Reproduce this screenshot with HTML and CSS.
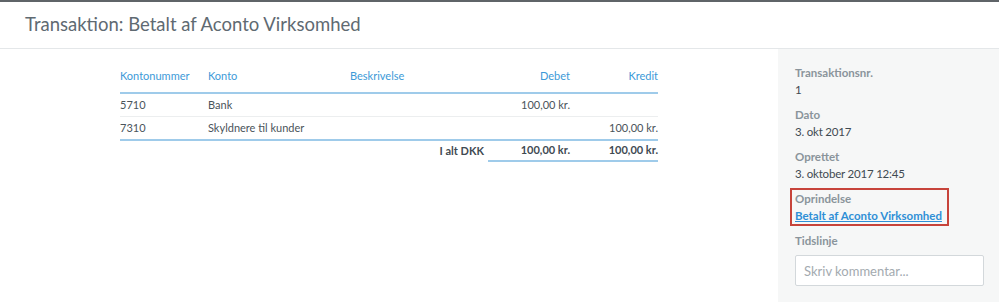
FILE: index.html
```html
<!DOCTYPE html>
<html lang="da">

<head>
    <meta charset="UTF-8">
    <meta name="viewport" content="width=device-width, initial-scale=1.0">
    <title>Transaktion</title>
    <link rel="stylesheet" href="styles.css">
</head>

<body>
    <div class="header">
        Transaktion: Betalt af Aconto Virksomhed
    </div>
    <div class="page">
        <div class="main">
            <table class="entries">
                <thead>
                    <tr>
                        <th class="col-no">Kontonummer</th>
                        <th class="col-account">Konto</th>
                        <th class="col-desc">Beskrivelse</th>
                        <th class="col-amount">Debet</th>
                        <th class="col-amount col-credit">Kredit</th>
                    </tr>
                </thead>
                <tbody>
                    <tr>
                        <td>5710</td>
                        <td>Bank</td>
                        <td></td>
                        <td class="amount">100,00 kr.</td>
                        <td class="amount"></td>
                    </tr>
                    <tr>
                        <td>7310</td>
                        <td>Skyldnere til kunder</td>
                        <td></td>
                        <td class="amount"></td>
                        <td class="amount">100,00 kr.</td>
                    </tr>
                </tbody>
                <tfoot>
                    <tr>
                        <td></td>
                        <td></td>
                        <td class="total-label">I alt DKK</td>
                        <td class="amount total">100,00 kr.</td>
                        <td class="amount total">100,00 kr.</td>
                    </tr>
                </tfoot>
            </table>
        </div>
        <div class="sidebar">
            <div class="field">
                <div class="label">Transaktionsnr.</div>
                <div class="value">1</div>
            </div>
            <div class="field">
                <div class="label">Dato</div>
                <div class="value">3. okt 2017</div>
            </div>
            <div class="field">
                <div class="label">Oprettet</div>
                <div class="value">3. oktober 2017 12:45</div>
            </div>
            <div class="field origin">
                <div class="label">Oprindelse</div>
                <a href="#" class="value link">Betalt af Aconto Virksomhed</a>
            </div>
            <div class="field">
                <div class="label">Tidslinje</div>
                <input type="text" class="comment" placeholder="Skriv kommentar...">
            </div>
        </div>
    </div>
</body>

</html>
```

FILE: styles.css
```css
* {
    margin: 0;
    padding: 0;
    box-sizing: border-box;
}

body {
    font-family: "Lato", "Open Sans", sans-serif;
    color: #3f4a52;
    background: #fff;
    height: 302px;
    overflow: hidden;
}

.header {
    height: 49px;
    padding-left: 25px;
    border-top: 2px solid #5f6468;
    border-bottom: 1px solid #e4e7e9;
    font-size: 18.5px;
    line-height: 44px;
    color: #5f6a72;
}

.page {
    display: flex;
    height: 253px;
}

.main {
    width: 778px;
    padding-top: 11px;
}

.sidebar {
    flex: 1;
    background: #f6f7f7;
    padding: 15px 15px 0 17px;
}

/* tabel */

.entries {
    width: 538px;
    margin: 0 auto;
    border-collapse: collapse;
    font-size: 11px;
}

.entries th {
    font-weight: 400;
    color: #3d9ad8;
    text-align: left;
    padding: 8px 0;
    line-height: 16px;
    border-bottom: 2px solid #9fcbea;
}

.entries .col-no {
    width: 88px;
}

.entries .col-account {
    width: 142px;
}

.entries .col-desc {
    width: 138px;
}

.entries .col-amount {
    width: 82px;
    text-align: right;
}

.entries .col-credit {
    width: 88px;
}

.entries td {
    padding: 3px 0;
    line-height: 16px;
    color: #4a545b;
}

.entries tbody tr {
    border-bottom: 1px solid #eceeef;
}

.entries tbody tr:last-child {
    border-bottom: 2px solid #9fcbea;
}

.entries .amount {
    text-align: right;
}

.entries tfoot td {
    padding: 1px 0 2px;
    font-weight: 700;
    color: #3f4a52;
}

.entries .total-label {
    text-align: right;
    padding-right: 4px;
}

.entries .total {
    border-bottom: 2px solid #9fcbea;
}

/* sidebar */

.field {
    margin-bottom: 8px;
    font-size: 11.5px;
    line-height: 17px;
}

.label {
    font-weight: 700;
    color: #8a949b;
}

.value {
    color: #3f4a52;
    letter-spacing: -0.2px;
}

.origin {
    display: inline-block;
    margin-left: -3px;
    padding: 0 5px 0 3px;
    outline: 2px solid #c7443b;
}

.link {
    display: block;
    font-weight: 700;
    color: #2f8fd6;
    letter-spacing: 0;
    text-decoration: underline;
}

.comment {
    display: block;
    width: 189px;
    height: 31px;
    margin-top: 6px;
    padding: 0 8px;
    border: 1px solid #d3d8db;
    border-radius: 2px;
    background: #fff;
    font-family: inherit;
    font-size: 13px;
    color: #3f4a52;
    outline: none;
}

.comment::placeholder {
    color: #a3aaaf;
}
```
